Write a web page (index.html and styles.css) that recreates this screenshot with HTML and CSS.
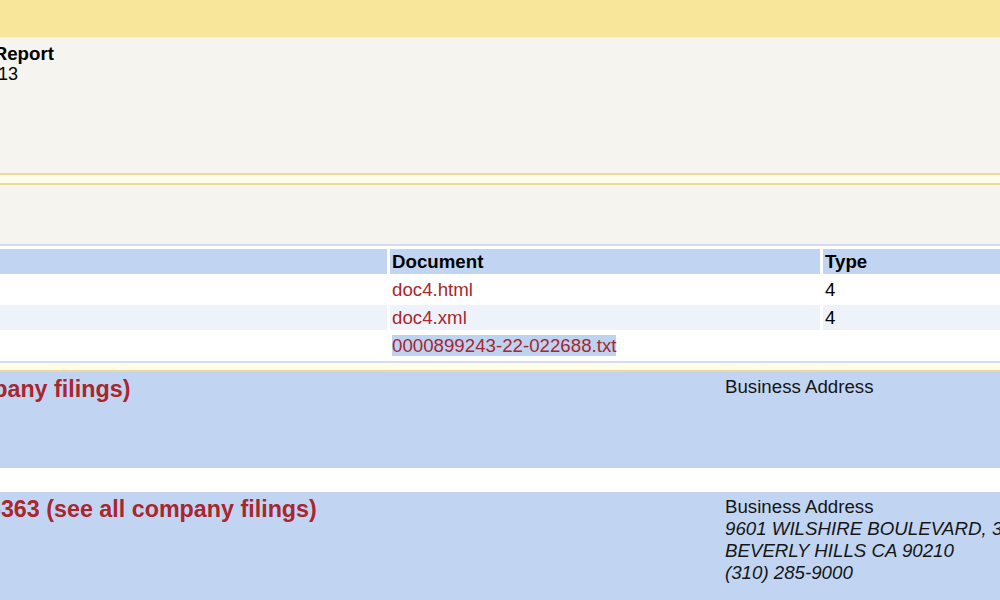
FILE: index.html
```html
<!DOCTYPE html>
<html lang="en">
<head>
	<meta charset="UTF-8">
	<title>EDGAR Filing Index - 0000899243-22-022688</title>
	<link rel="stylesheet" href="styles.css">
</head>
<body>
	<div id="page">
		<div id="formHeader"></div>
		<div class="formContent">
			<div class="formGrouping first">
				<div class="infoHead">Filing Date</div>
				<div class="info">2022-06-15</div>
				<div class="infoHead">Accepted</div>
				<div class="info">2022-06-15 19:15:33</div>
				<div class="infoHead">Documents</div>
				<div class="info">1</div>
			</div>
			<div class="formGrouping">
				<div class="infoHead">Period of Report</div>
				<div class="info">2022-06-13</div>
			</div>
		</div>
		<div class="spacer"></div>
		<div class="formContent files">
			<p class="tableSummary">Document Format Files</p>
			<table class="tableFile" summary="Document Format Files">
				<tr>
					<th class="seq" scope="col">Seq</th>
					<th class="desc" scope="col">Description</th>
					<th class="doc" scope="col">Document</th>
					<th class="type" scope="col">Type</th>
					<th class="size" scope="col">Size</th>
				</tr>
				<tr>
					<td>1</td>
					<td>FORM 4</td>
					<td><a href="#">doc4.html</a></td>
					<td>4</td>
					<td>&nbsp;</td>
				</tr>
				<tr class="evenRow">
					<td>1</td>
					<td>FORM 4</td>
					<td><a href="#">doc4.xml</a></td>
					<td>4</td>
					<td>3905</td>
				</tr>
				<tr>
					<td>&nbsp;</td>
					<td>Complete submission text file</td>
					<td><a href="#"><span class="selected">0000899243-22-022688.txt</span></a></td>
					<td>&nbsp;</td>
					<td>5304</td>
				</tr>
			</table>
		</div>
		<div class="spacer short"></div>

		<!-- Reporting owner -->
		<div class="filer first">
			<div class="companyInfo">
				<span class="companyName">Lee Jason (Reporting) <abbr title="Central Index Key">CIK</abbr>: <a href="#">0001867530 (see all company filings)</a></span>
				<p class="identInfo">Type: 4 | Act: 34 | File No.: 001-40373 | Film No.: 221018583</p>
			</div>
			<div class="mailer">Business Address</div>
			<div class="mailer">Mailing Address
				<span class="mailerAddress">C/O ENDEAVOR GROUP HOLDINGS, INC.</span>
				<span class="mailerAddress">BEVERLY HILLS CA 90210</span>
			</div>
		</div>

		<!-- Issuer -->
		<div class="filer">
			<div class="companyInfo">
				<span class="companyName">Endeavor Group Holdings, Inc. (Issuer) <abbr title="Central Index Key">CIK</abbr>: <a href="#">0001766363 (see all company filings)</a></span>
				<p class="identInfo">IRS No.: 831823968 | State of Incorp.: DE | Fiscal Year End: 1231<br>Type: 4 | Act: 34</p>
			</div>
			<div class="mailer">Business Address
				<span class="mailerAddress">9601 WILSHIRE BOULEVARD, 3RD FLOOR</span>
				<span class="mailerAddress">BEVERLY HILLS CA 90210</span>
				<span class="mailerAddress">(310) 285-9000</span>
			</div>
			<div class="mailer">Mailing Address
				<span class="mailerAddress">9601 WILSHIRE BOULEVARD, 3RD FLOOR</span>
				<span class="mailerAddress">BEVERLY HILLS CA 90210</span>
			</div>
		</div>
	</div>
</body>
</html>
```

FILE: styles.css
```css
		html, body {
			margin: 0;
			background-color: #fff;
			overflow: hidden;
		}
		body {
			font-family: "Liberation Sans", Arial, sans-serif;
			font-size: 18.7px;
			color: #000;
		}
		a {
			color: #a9262d;
			text-decoration: none;
		}
		abbr {
			text-decoration: none;
		}
		/* page is scrolled sideways in the shot */
		#page {
			width: 2000px;
			margin-left: -600px;
		}
		#formHeader {
			height: 37px;
			background-color: #f8e79b;
			border-bottom: 1px solid #fbf0c6;
		}
		.formContent {
			background-color: #f5f4ee;
			display: flex;
			height: 137px;
			padding: 6px 0 0 17.5px;
			box-sizing: border-box;
			border-bottom: 2px solid #eed89c;
		}
		.formGrouping.first {
			width: 490px;
		}
		.infoHead {
			font-weight: bold;
			font-size: 18.7px;
			line-height: 20px;
		}
		.info {
			font-size: 18px;
			padding-left: 18.5px;
			margin-bottom: 1px;
		}
		.formGrouping.first .info {
			padding-left: 0;
		}
		.spacer {
			height: 8px;
			background-color: #fffdea;
		}
		.spacer.short {
			height: 7px;
		}
		.formContent.files {
			display: block;
			height: auto;
			padding: 0 0 0 16px;
			border-bottom: 0;
			border-top: 2px solid #eed89c;
		}
		.tableSummary {
			margin: 0;
			height: 59px;
			padding-top: 16px;
			box-sizing: border-box;
			font-weight: bold;
		}
		.tableFile {
			table-layout: fixed;
			width: 1915px;
			border: 2px solid #d4dcef;
			border-spacing: 3px;
			background-color: #fff;
		}
		.tableFile th, .tableFile td {
			height: 25px;
			padding: 0 2px;
			box-sizing: border-box;
			text-align: left;
			vertical-align: middle;
			white-space: nowrap;
			overflow: hidden;
		}
		.tableFile th {
			background-color: #c1d5f3;
		}
		.tableFile .seq { width: 60px; }
		.tableFile .desc { width: 903px; }
		.tableFile .doc { width: 430px; }
		.tableFile .type { width: 300px; }
		.tableFile .size { width: 200px; }
		.tableFile .evenRow td {
			background-color: #eef3fb;
		}
		.selected {
			background-color: #bcd3f2;
		}
		.filer {
			display: flex;
			background-color: #c1d5f3;
			padding: 4px 0 0 17px;
			min-height: 110px;
		}
		.filer.first {
			height: 98px;
			min-height: 0;
			box-sizing: border-box;
			border-top: 2px solid #eed89c;
			margin-bottom: 24px;
		}
		.companyInfo {
			width: 1308px;
			flex: none;
		}
		.companyName {
			font-weight: bold;
			font-size: 23.3px;
		}
		.identInfo {
			margin: 4px 0 0;
			font-size: 14px;
		}
		.mailer {
			width: 400px;
			flex: none;
			color: #151515;
			white-space: nowrap;
		}
		.mailerAddress {
			display: block;
			font-style: italic;
		}
```
